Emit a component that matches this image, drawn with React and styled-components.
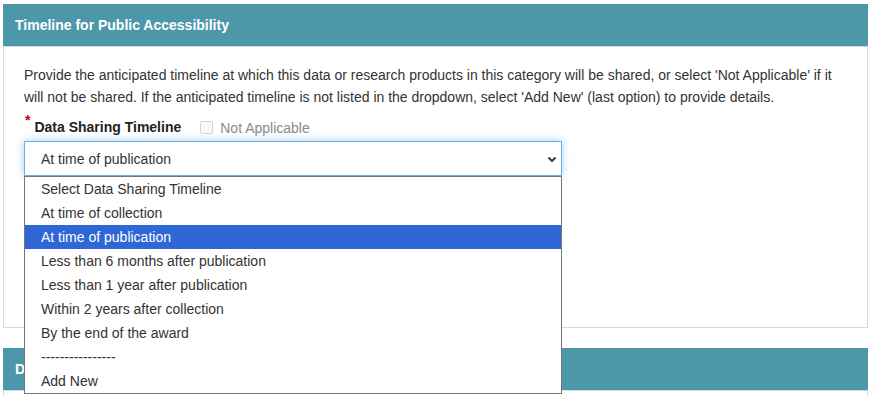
import React from "react";
import styled, { createGlobalStyle } from "styled-components";

const Global = createGlobalStyle`
  html, body { margin: 0; padding: 0; background: #fff; }
  body { font-family: "Liberation Sans", Arial, sans-serif; }
  * { box-sizing: border-box; }
`;

const Page = styled.div`
  width: 872px;
  height: 396px;
  overflow: hidden;
  padding: 4px 4px 0 3px;
  display: flex;
  flex-direction: column;
  gap: 20px;
`;

const Panel = styled.section`
  display: flex;
  flex-direction: column;
  width: 865px;
`;

const PanelHeader = styled.div`
  height: 42px;
  background: #4d97ab;
  color: #fff;
  font-weight: bold;
  font-size: 14px;
  display: flex;
  align-items: center;
  padding-left: 12px;
`;

const PanelBody = styled.div`
  border: 1px solid #d5dadb;
  height: ${(p) => p.$h}px;
  padding: 17px 20px 0 20px;
  position: relative;
`;

const Description = styled.p`
  margin: 0;
  font-size: 14px;
  line-height: 22px;
  color: #333;
`;

const LabelRow = styled.div`
  display: flex;
  align-items: center;
  height: 24px;
  margin-top: 7px;
`;

const Asterisk = styled.span`
  color: #c00;
  font-size: 14px;
  font-weight: bold;
  align-self: flex-start;
  margin-top: -3px;
  margin-left: 1px;
  margin-right: 4px;
`;

const Label = styled.span`
  font-size: 14px;
  font-weight: bold;
  color: #222;
`;

const CheckWrap = styled.label`
  display: flex;
  align-items: center;
  margin-left: 19px;
  color: #8a8a8a;
  font-size: 14px;
  margin-top: 1px;
`;

const Box = styled.span`
  width: 13px;
  height: 13px;
  border: 1px solid #d3d3d3;
  border-radius: 2px;
  background: #fafafa;
  margin-right: 7px;
`;

const SelectWrap = styled.div`
  position: relative;
  margin-top: 2px;
  width: 538px;
`;

const SelectBox = styled.div`
  height: 35px;
  border: 1px solid #66afe9;
  box-shadow: 0 0 8px rgba(102, 175, 233, 0.6);
  display: flex;
  align-items: center;
  justify-content: space-between;
  padding: 0 3px 0 16px;
  font-size: 14px;
  color: #333;
  background: #fff;
`;

const List = styled.ul`
  position: absolute;
  top: 35px;
  left: 0;
  width: 538px;
  margin: 0;
  padding: 0;
  list-style: none;
  border: 1px solid #767676;
  background: #fff;
  z-index: 10;
`;

const Option = styled.li`
  height: 24px;
  display: flex;
  align-items: center;
  padding-left: 16px;
  font-size: 14px;
  color: ${(p) => (p.$active ? "#fff" : "#333")};
  background: ${(p) => (p.$active ? "#2f68d6" : "transparent")};
`;

const Chevron = () => (
  <svg width="12" height="12" viewBox="0 0 12 12">
    <path d="M2.5 4.5 L6 8 L9.5 4.5" fill="none" stroke="#444" strokeWidth="2.2" />
  </svg>
);

const options = [
  "Select Data Sharing Timeline",
  "At time of collection",
  "At time of publication",
  "Less than 6 months after publication",
  "Less than 1 year after publication",
  "Within 2 years after collection",
  "By the end of the award",
  "----------------",
  "Add New",
];

export default function App() {
  return (
    <>
      <Global />
      <Page>
        <Panel>
          <PanelHeader>Timeline for Public Accessibility</PanelHeader>
          <PanelBody $h={282}>
            <Description>
              Provide the anticipated timeline at which this data or research products in this category will be shared, or select 'Not Applicable' if it will not be shared. If the anticipated timeline is not listed in the dropdown, select 'Add New' (last option) to provide details.
            </Description>
            <LabelRow>
              <Asterisk>*</Asterisk>
              <Label>Data Sharing Timeline</Label>
              <CheckWrap>
                <Box />
                Not Applicable
              </CheckWrap>
            </LabelRow>
            <SelectWrap>
              <SelectBox>
                <span>At time of publication</span>
                <Chevron />
              </SelectBox>
              <List>
                {options.map((o) => (
                  <Option key={o} $active={o === "At time of publication"}>
                    {o}
                  </Option>
                ))}
              </List>
            </SelectWrap>
          </PanelBody>
        </Panel>
        <Panel>
          <PanelHeader>Data Sharing</PanelHeader>
          <PanelBody $h={40} />
        </Panel>
      </Page>
    </>
  );
}
